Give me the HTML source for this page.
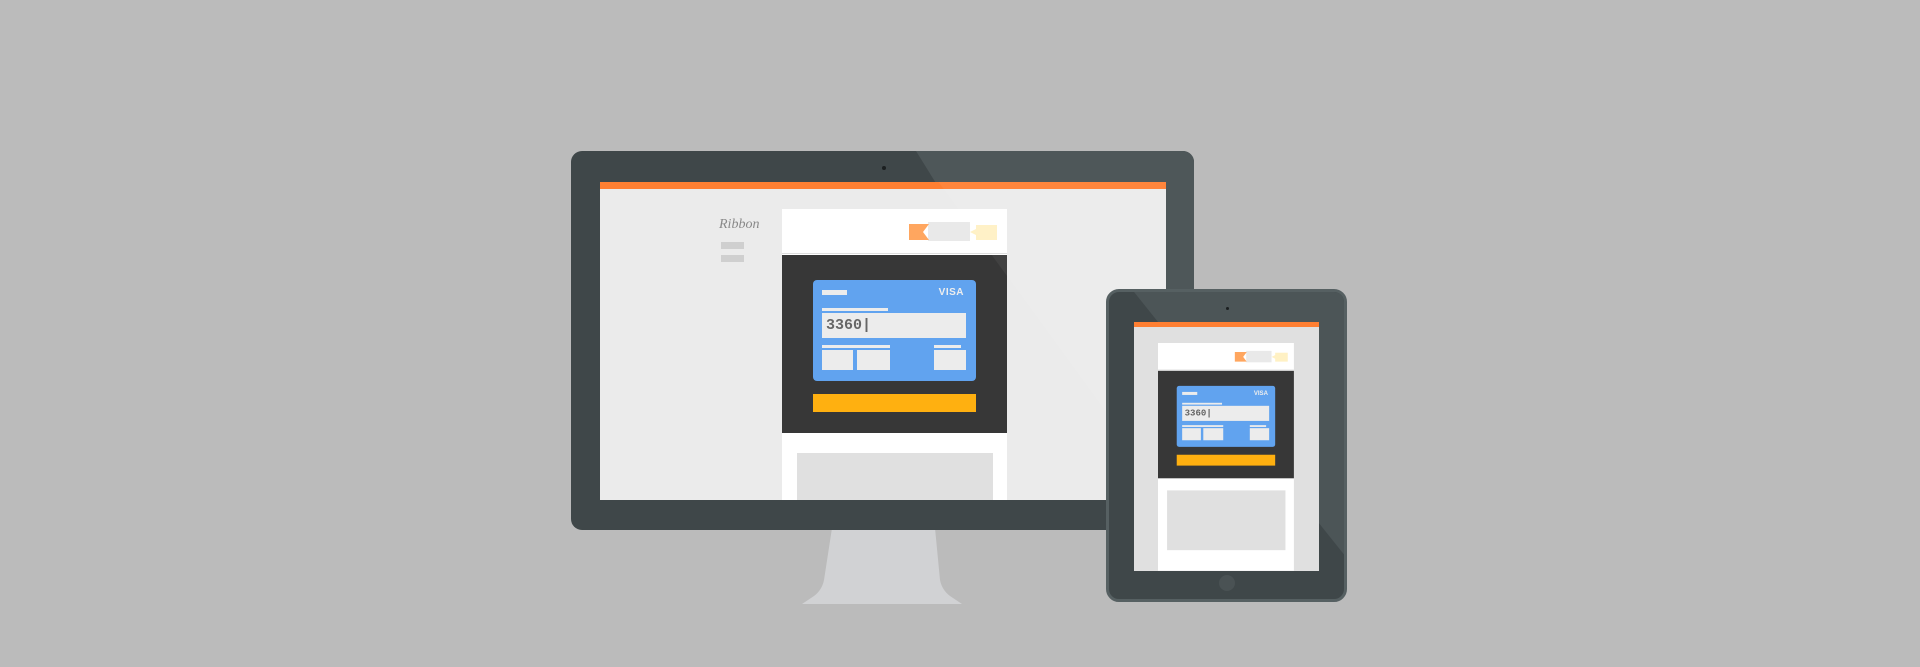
<!DOCTYPE html>
<html><head><meta charset="utf-8"><style>
*{margin:0;padding:0;box-sizing:border-box}
body{width:1920px;height:667px;background:#bbbbbb;position:relative;overflow:hidden;font-family:"Liberation Sans",sans-serif}
.a{position:absolute}
.col{position:absolute;width:225px;height:377px;background:#fff;transform-origin:0 0}
.col .hd{position:absolute;left:0;top:0;width:225px;height:45px;border-bottom:1px solid #ddd}
.col .dk{position:absolute;left:0;top:46px;width:225px;height:178px;background:#373737}
.card{position:absolute;left:31px;top:25px;width:163px;height:101px;background:#61a3ef;border-radius:4px}
.card div{position:absolute;background:#ececec}
.btn{position:absolute;left:31px;top:139px;width:163px;height:18px;background:#ffb010}
.gb{position:absolute;left:15px;top:244px;width:196px;height:99px;background:#e0e0e0}
</style></head><body>
<svg class="a" style="left:0;top:0" width="1920" height="667">
<path d="M832 528 L935 528 L940 580 Q942 590 950 596 L962 604 L802 604 L814 596 Q822 590 824 580 Z" fill="#d1d2d4"/>
</svg>
<div class="a" style="left:571px;top:151px;width:623px;height:379px;background:#3f4749;border-radius:11px;overflow:hidden">
 <svg class="a" style="left:0;top:0" width="623" height="379"><polygon points="345,0 623,0 623,379 580,379" fill="#4e5759"/></svg>
 <div class="a" style="left:311px;top:15px;width:4px;height:4px;border-radius:50%;background:#1b1f20"></div>
 <div class="a" style="left:29px;top:31px;width:566px;height:318px;background:#ebebeb;overflow:hidden">
  <div class="a" style="left:0;top:0;width:566px;height:7px;background:#ff7f32"></div>
  <div class="a" style="left:119px;top:35px;font-family:'Liberation Serif',serif;font-style:italic;font-size:14px;color:#888">Ribbon</div>
  <div class="a" style="left:121px;top:60px;width:23px;height:7px;background:#cfcfcf"></div>
  <div class="a" style="left:121px;top:73px;width:23px;height:7px;background:#cfcfcf"></div>
  <div class="col" style="left:182px;top:27px">
   <div class="hd">
    <div class="a" style="left:146px;top:13px;width:42px;height:19px;background:#e9e9e9"></div>
    <svg class="a" style="left:127px;top:15px" width="20" height="16"><polygon points="0,0 20,0 14,8 20,16 0,16" fill="#ffa65f"/></svg>
    <svg class="a" style="left:188px;top:16px" width="27" height="15"><polygon points="6,0 27,0 27,15 6,15 6,10 0,7 6,4" fill="#fff1c4"/></svg>
   </div>
   <div class="dk">
    <div class="card">
     <div style="left:9px;top:10px;width:25px;height:5px"></div>
     <span class="a" style="right:12px;top:7px;font-size:10px;font-weight:bold;color:#eee;letter-spacing:0.5px">VISA</span>
     <div style="left:9px;top:28px;width:66px;height:3px"></div>
     <div style="left:9px;top:33px;width:144px;height:25px"><span class="a" style="left:4px;top:4px;font-family:'Liberation Mono',monospace;font-size:15px;font-weight:bold;color:#666">3360|</span></div>
     <div style="left:9px;top:65px;width:68px;height:3px"></div>
     <div style="left:121px;top:65px;width:27px;height:3px"></div>
     <div style="left:9px;top:70px;width:31px;height:20px"></div>
     <div style="left:44px;top:70px;width:33px;height:20px"></div>
     <div style="left:121px;top:70px;width:32px;height:20px"></div>
    </div>
    <div class="btn"></div>
   </div>
   <div class="gb"></div>
  </div>
  <svg class="a" style="left:0;top:0" width="566" height="318"><polygon points="316,-31 566,-31 566,318 570,318" fill="#fff" opacity="0.05"/></svg>
 </div>
</div>
<div class="a" style="left:1106px;top:289px;width:241px;height:313px;background:#3f4749;border-radius:13px;border:3px solid #566062;overflow:hidden">
 <svg class="a" style="left:0;top:0" width="241" height="313"><polygon points="25,0 241,0 241,270" fill="#4c5557"/></svg>
 <div class="a" style="left:117px;top:15px;width:3px;height:3px;border-radius:50%;background:#1b1f20"></div>
 <div class="a" style="left:110px;top:283px;width:16px;height:16px;border-radius:50%;background:#4a5254"></div>
</div>
<div class="a" style="left:1134px;top:322px;width:185px;height:249px;background:#e0e0e0;overflow:hidden">
 <div class="a" style="left:0;top:0;width:185px;height:5px;background:#ff7f32"></div>
 <div class="col" style="left:24px;top:21px;transform:scale(0.604)">
   <div class="hd">
    <div class="a" style="left:146px;top:13px;width:42px;height:19px;background:#e9e9e9"></div>
    <svg class="a" style="left:127px;top:15px" width="20" height="16"><polygon points="0,0 20,0 14,8 20,16 0,16" fill="#ffa65f"/></svg>
    <svg class="a" style="left:188px;top:16px" width="27" height="15"><polygon points="6,0 27,0 27,15 6,15 6,10 0,7 6,4" fill="#fff1c4"/></svg>
   </div>
   <div class="dk">
    <div class="card">
     <div style="left:9px;top:10px;width:25px;height:5px"></div>
     <span class="a" style="right:12px;top:7px;font-size:10px;font-weight:bold;color:#eee">VISA</span>
     <div style="left:9px;top:28px;width:66px;height:3px"></div>
     <div style="left:9px;top:33px;width:144px;height:25px"><span class="a" style="left:4px;top:4px;font-family:'Liberation Mono',monospace;font-size:15px;font-weight:bold;color:#666">3360|</span></div>
     <div style="left:9px;top:65px;width:68px;height:3px"></div>
     <div style="left:121px;top:65px;width:27px;height:3px"></div>
     <div style="left:9px;top:70px;width:31px;height:20px"></div>
     <div style="left:44px;top:70px;width:33px;height:20px"></div>
     <div style="left:121px;top:70px;width:32px;height:20px"></div>
    </div>
    <div class="btn"></div>
   </div>
   <div class="gb"></div>
 </div>
</div>
</body></html>
